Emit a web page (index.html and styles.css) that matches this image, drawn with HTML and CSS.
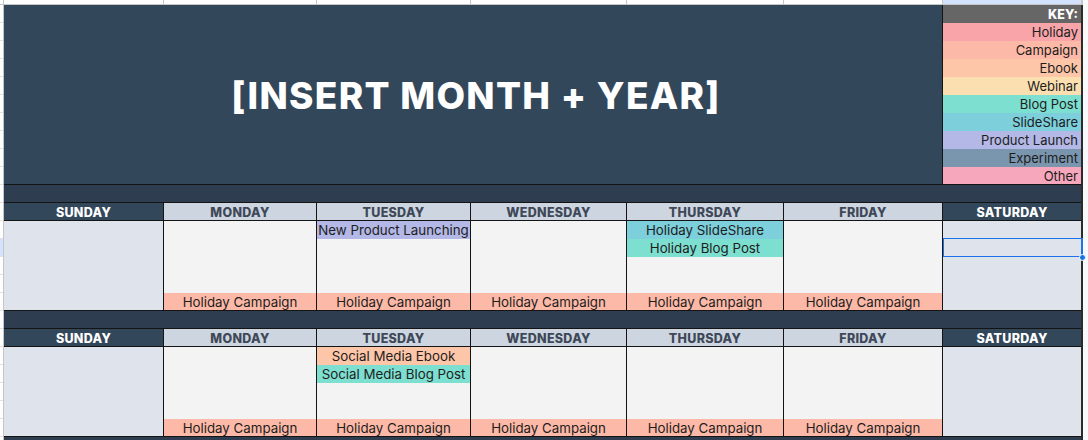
FILE: index.html
```html
<!DOCTYPE html>
<html>
<head>
<meta charset="utf-8">
<link rel="stylesheet" href="styles.css">
</head>
<body>
<div class="page">
  <div class="corner"></div>
  <div class="colstrip">
    <div class="cs"></div><div class="cs"></div><div class="cs"></div><div class="cs"></div><div class="cs"></div><div class="cs"></div><div class="cs sel-col"></div>
  </div>
  <div class="gutter"></div>
  <div class="sheet">
    <div class="title">[INSERT MONTH + YEAR]</div>
    <div class="key">
      <div class="key-head">KEY:</div>
      <div class="k c-holiday">Holiday</div>
      <div class="k c-campaign">Campaign</div>
      <div class="k c-ebook">Ebook</div>
      <div class="k c-webinar">Webinar</div>
      <div class="k c-blog">Blog Post</div>
      <div class="k c-slide">SlideShare</div>
      <div class="k c-launch">Product Launch</div>
      <div class="k c-exp">Experiment</div>
      <div class="k c-other">Other</div>
    </div>

    <div class="spacer"></div>

    <div class="dh we">SUNDAY</div>
    <div class="dh">MONDAY</div>
    <div class="dh">TUESDAY</div>
    <div class="dh">WEDNESDAY</div>
    <div class="dh">THURSDAY</div>
    <div class="dh">FRIDAY</div>
    <div class="dh we">SATURDAY</div>

    <div class="day we"></div>
    <div class="day"><div class="ev c-campaign">Holiday Campaign</div></div>
    <div class="day">
      <div class="ev c-launch">New Product Launching</div>
      <div class="ev c-campaign">Holiday Campaign</div>
    </div>
    <div class="day"><div class="ev c-campaign">Holiday Campaign</div></div>
    <div class="day">
      <div class="ev c-slide">Holiday SlideShare</div>
      <div class="ev c-blog">Holiday Blog Post</div>
      <div class="ev c-campaign">Holiday Campaign</div>
    </div>
    <div class="day"><div class="ev c-campaign">Holiday Campaign</div></div>
    <div class="day we">
      <div class="blank"></div>
      <div class="selbox"><span class="handle"></span></div>
    </div>

    <div class="spacer"></div>

    <div class="dh we">SUNDAY</div>
    <div class="dh">MONDAY</div>
    <div class="dh">TUESDAY</div>
    <div class="dh">WEDNESDAY</div>
    <div class="dh">THURSDAY</div>
    <div class="dh">FRIDAY</div>
    <div class="dh we">SATURDAY</div>

    <div class="day we"></div>
    <div class="day"><div class="ev c-campaign">Holiday Campaign</div></div>
    <div class="day">
      <div class="ev c-ebook">Social Media Ebook</div>
      <div class="ev c-blog">Social Media Blog Post</div>
      <div class="ev c-campaign">Holiday Campaign</div>
    </div>
    <div class="day"><div class="ev c-campaign">Holiday Campaign</div></div>
    <div class="day"><div class="ev c-campaign">Holiday Campaign</div></div>
    <div class="day"><div class="ev c-campaign">Holiday Campaign</div></div>
    <div class="day we"></div>

    <div class="spacer"></div>
  </div>
</div>
</body>
</html>
```

FILE: styles.css
```css
* { box-sizing: border-box; }
html, body { margin: 0; padding: 0; }
body {
  width: 1088px;
  height: 440px;
  overflow: hidden;
  background: #f8f9fa;
  font-family: "Inter", "Noto Sans", sans-serif;
}
.page {
  display: grid;
  grid-template-columns: 4px 1079px;
  grid-template-rows: 5px 435px;
}
.corner {
  background: #fff;
  border-right: 1px solid #c4c7c5;
  border-bottom: 1px solid #c4c7c5;
}
.colstrip {
  display: grid;
  grid-template-columns: 159px 152px 153px 155px 156px 158px 138px;
  column-gap: 1px;
  background: #c4c7c5;
  border-bottom: 1px solid #c4c7c5;
  padding-right: 2px;
}
.cs { background: #fff; }
.cs.sel-col { background: #d3e3fd; }
.gutter {
  border-right: 1px solid #c4c7c5;
  background:
    linear-gradient(#d3e3fd, #d3e3fd) 0 234px / 100% 17px no-repeat,
    repeating-linear-gradient(to bottom, #fff 0 17px, #e1e1e1 17px 18px);
}
.sheet {
  display: grid;
  grid-template-columns: 159px 152px 153px 155px 156px 158px 138px;
  grid-template-rows: 179px 17px 17px 89px 17px 17px 89px 17px;
  gap: 1px;
  background: #141414;
  border-right: 2px solid #2a2a2a;
  width: 1079px;
}
.title {
  grid-column: 1 / 7;
  background: #33475b;
  color: #fff;
  display: flex;
  align-items: center;
  justify-content: center;
  font-family: "Inter", sans-serif;
  font-weight: 800;
  font-size: 37px;
  letter-spacing: 1.3px;
  padding-top: 1px;
  padding-left: 6px;
}
.key {
  display: grid;
  grid-template-rows: 18px repeat(8, 18px) 17px;
  font-size: 13px;
  color: #1d1d1d;
}
.key-head {
  background: #666666;
  color: #fff;
  font-weight: 800;
  text-align: right;
  padding-right: 3px;
  line-height: 19px;
  font-size: 12.5px;
}
.k {
  text-align: right;
  padding-right: 3px;
  line-height: 19px;
}
.spacer {
  grid-column: 1 / 8;
  background: #2e3e50;
}
.dh {
  background: #ccd5e0;
  color: #3e4858;
  font-weight: 800;
  font-size: 12.5px;
  letter-spacing: 0.3px;
  display: flex;
  align-items: center;
  justify-content: center;
  padding-top: 1px;
}
.dh.we {
  background: #33475b;
  color: #fff;
}
.day {
  background: #f3f3f3;
  display: flex;
  flex-direction: column;
  position: relative;
}
.day.we { background: #dfe3eb; }
.ev {
  height: 18px;
  line-height: 19px;
  text-align: center;
  font-size: 13.3px;
  color: #1d1d1d;
  white-space: nowrap;
  overflow: hidden;
}
.ev:last-child {
  margin-top: auto;
  height: 17px;
  line-height: 18px;
}
.blank { height: 17px; }
.selbox {
  height: 19px;
  margin-right: -2px;
  border: 1px solid #1a73e8;
  border-right-width: 2px;
  position: relative;
}
.handle {
  position: absolute;
  right: -5px;
  bottom: -5px;
  width: 7px;
  height: 7px;
  border-radius: 50%;
  background: #1a73e8;
  border: 1px solid #fff;
}
.c-holiday { background: #f8a4a9; }
.c-campaign { background: #fdb9a7; }
.c-ebook { background: #fec6a8; }
.c-webinar { background: #fbdfb0; }
.c-blog { background: #7ddfd0; }
.c-slide { background: #7ccfdb; }
.c-launch { background: #b4b8e6; }
.c-exp { background: #7a95ae; }
.c-other { background: #f7a7bb; }
```
